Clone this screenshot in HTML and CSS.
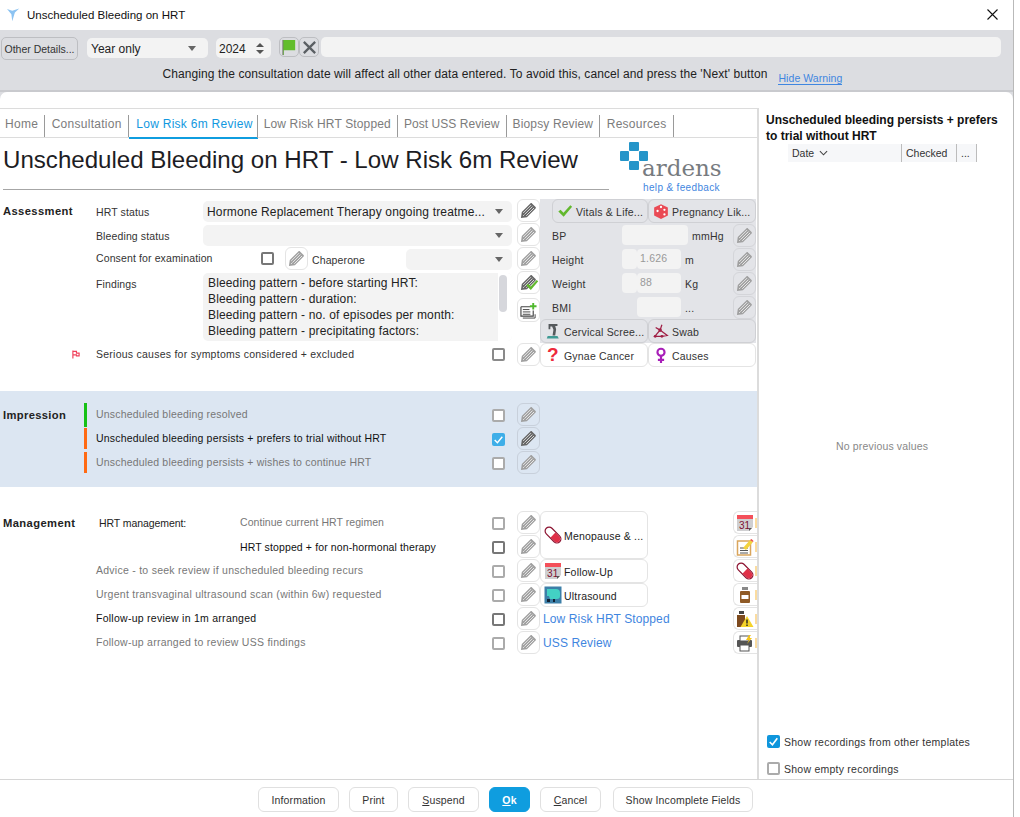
FILE: index.html
```html
<!DOCTYPE html>
<html lang="en">
<head>
<meta charset="utf-8">
<title>Unscheduled Bleeding on HRT</title>
<link rel="stylesheet" href="styles.css">
</head>
<body>
<svg class="defs" aria-hidden="true">
  <symbol id="pencil" viewBox="0 0 18 18">
    <path d="M1 17l.9-6.300L11 1.500c.5-.5 1.200-.5 1.700 0l3.800 3.800c.5.5.5 1.200 0 1.700L7.300 16.100z" fill="currentColor"/>
    <path d="M3.400 11.600l8.300-8.300M5 13.100l8.300-8.300M6.600 14.600l8.300-8.300M3.300 14.700l1.300-1.300" stroke="#fff" stroke-width=".8"/>
  </symbol>
  <symbol id="check" viewBox="0 0 18 18">
    <path d="M1.500 9.500l2.500-2 3.300 3.400L15 2.500l2 1.700L7.500 15.500z" fill="#62b82e"/>
  </symbol>
  <symbol id="calendar" viewBox="0 0 18 18">
    <rect x="1" y="1" width="16" height="16" fill="#cfcfd1"/>
    <rect x="1" y="1" width="16" height="4" fill="#f4505a"/>
    <text x="3" y="14.500" class="cal-text">31</text>
    <path d="M17 13v4h-4z" fill="#fff"/><path d="M13 14h3l-3 3z" fill="#555"/>
  </symbol>
  <symbol id="pill" viewBox="0 0 18 18">
    <g transform="rotate(45 9 9)">
      <rect x="-.5" y="5" width="19" height="8" rx="4" fill="#fff" stroke="#8c1230" stroke-width="1.200"/>
      <path d="M9 5.600h5.500a3.400 3.400 0 0 1 0 6.800H9z" fill="#e03048"/>
    </g>
  </symbol>
</svg>

<div class="window">
  <header class="titlebar">
    <svg class="app-icon" viewBox="0 0 16 16" aria-hidden="true"><path d="M0 1l6 2 8-2.500-5 4.500-3 10-1-8z" fill="#8cc3f2"/></svg>
    <span class="titlebar-text">Unscheduled Bleeding on HRT</span>
    <svg class="close-icon" viewBox="0 0 11 11" aria-hidden="true"><path d="M.5.500l10 10M10.500.500l-10 10" stroke="#111" stroke-width="1.100"/></svg>
  </header>

  <section class="toolbar">
    <div class="toolbar-row">
      <button class="other-btn">Other Details...</button>
      <div class="select year-select"><span>Year only</span><i class="caret"></i></div>
      <div class="select spin-select"><span>2024</span>
        <span class="spin"><i class="spin-up"></i><i class="spin-down"></i></span></div>
      <div class="tool-icons">
        <span class="tool-btn"><svg viewBox="0 0 18 18" aria-hidden="true"><path d="M2 1h13v11H3v5H2z" fill="#62bd2c"/><path d="M2 1v16" stroke="#777"/></svg></span>
        <span class="tool-btn"><svg viewBox="0 0 18 18" aria-hidden="true"><path d="M3 3l12 12M15 3L3 15" stroke="#5a5f63" stroke-width="2.400"/></svg></span>
      </div>
      <div class="tool-input"></div>
    </div>
    <div class="warning-row">
      <span class="warning">Changing the consultation date will affect all other data entered. To avoid this, cancel and press the 'Next' button</span>
      <a class="hide-warning">Hide Warning</a>
    </div>
  </section>

  <main class="panel">
    <div class="panel-main">
      <div class="template">
        <nav class="tabs">
          <a class="tab">Home</a>
          <a class="tab">Consultation</a>
          <a class="tab active">Low Risk 6m Review</a>
          <a class="tab tight">Low Risk HRT Stopped</a>
          <a class="tab tighter">Post USS Review</a>
          <a class="tab tight">Biopsy Review</a>
          <a class="tab">Resources</a>
        </nav>

        <div class="heading">
          <h1>Unscheduled Bleeding on HRT - Low Risk 6m Review</h1>
          <div class="logo">
            <svg class="logo-mark" viewBox="0 0 28 28" aria-hidden="true">
              <rect x="9" y="0" width="10" height="9" rx="1" fill="#2595c9"/>
              <rect x="0" y="9" width="9" height="10" rx="1" fill="#2595c9"/>
              <rect x="19" y="9" width="9" height="10" rx="1" fill="#2595c9"/>
              <rect x="9" y="19" width="10" height="9" rx="1" fill="#2595c9"/>
            </svg>
            <span class="logo-name">ardens</span>
            <a class="logo-link">help &amp; feedback</a>
          </div>
        </div>

        <section class="assess">
          <div class="assess-main">
            <h2 class="sec-label">Assessment</h2>
            <span class="lbl">HRT status</span>
            <div class="select field"><span>Hormone Replacement Therapy ongoing treatme...</span><i class="caret"></i></div>
            <span></span>
            <span class="pen-box dark"><svg><use href="#pencil"/></svg></span>

            <span></span>
            <span class="lbl">Bleeding status</span>
            <div class="select field"><i class="caret"></i></div>
            <span></span>
            <span class="pen-box"><svg><use href="#pencil"/></svg></span>

            <span></span>
            <div class="consent">
              <span class="lbl consent-lbl">Consent for examination</span>
              <i class="cb"></i>
              <span class="pen-box"><svg><use href="#pencil"/></svg></span>
              <span class="lbl chaperone">Chaperone</span>
              <div class="select chap-field"><i class="caret"></i></div>
            </div>
            <span></span>
            <span class="pen-box"><svg><use href="#pencil"/></svg></span>

            <span></span>
            <span class="lbl findings-lbl">Findings</span>
            <div class="findings">
              <div class="findings-text">
                <div>Bleeding pattern - before starting HRT:</div>
                <div>Bleeding pattern - duration:</div>
                <div>Bleeding pattern - no. of episodes per month:</div>
                <div>Bleeding pattern - precipitating factors:</div>
              </div>
              <div class="scrollbar"><i></i></div>
            </div>
            <span></span>
            <div class="pen-stack">
              <span class="pen-box dark pen-checked"><svg><use href="#pencil"/></svg><svg class="pen-tick"><use href="#check"/></svg></span>
              <span class="pen-box note-box"><svg viewBox="0 0 18 18" aria-hidden="true"><path d="M1 5h10M1 5v10h13V9" fill="none" stroke="#444" stroke-width="1.200"/><path d="M3 8h7M3 10.500h8M3 13h8M3 17h13v-4" fill="none" stroke="#444"/><path d="M14 1v7M10.500 4.500h7" stroke="#4fb82c" stroke-width="2"/></svg></span>
            </div>

            <span class="flag-cell"><svg class="flag" viewBox="0 0 9 9" aria-hidden="true"><path d="M1 0v9M1 1h4v2h3v3H5V5H1" fill="none" stroke="#f0405a" stroke-width="1.300"/></svg></span>
            <div class="serious">
              <span class="lbl">Serious causes for symptoms considered + excluded</span>
              <i class="cb"></i>
            </div>
            <span></span>
            <span class="pen-box"><svg><use href="#pencil"/></svg></span>
          </div>

          <div class="assess-side">
            <div class="side-grey">
              <div class="side-btns inset">
                <button class="grey-btn vitals"><svg><use href="#check"/></svg>Vitals &amp; Life...</button>
                <button class="grey-btn preg"><svg viewBox="0 0 14 14" aria-hidden="true"><path d="M1 4l6-3 6 3v7l-6 3-6-3z" fill="#ea4a55"/><circle cx="4" cy="7" r="1" fill="#fff"/><circle cx="10" cy="6" r="1" fill="#fff"/><circle cx="10" cy="10" r="1" fill="#fff"/><circle cx="7" cy="3.500" r="1" fill="#fff"/></svg>Pregnancy Lik...</button>
              </div>
              <div class="vital">
                <span class="v-name">BP</span>
                <i class="v-input bp"></i>
                <span class="v-unit">mmHg</span>
                <span class="pen-box grey"><svg><use href="#pencil"/></svg></span>
              </div>
              <div class="vital">
                <span class="v-name">Height</span>
                <i class="v-input stub"></i><span class="v-input val">1.626</span>
                <span class="v-unit">m</span>
                <span class="pen-box grey"><svg><use href="#pencil"/></svg></span>
              </div>
              <div class="vital">
                <span class="v-name">Weight</span>
                <i class="v-input stub"></i><span class="v-input val">88</span>
                <span class="v-unit">Kg</span>
                <span class="pen-box grey"><svg><use href="#pencil"/></svg></span>
              </div>
              <div class="vital">
                <span class="v-name">BMI</span>
                <i class="v-input stub blank"></i><span class="v-input val"></span>
                <span class="v-unit">...</span>
                <span class="pen-box grey"><svg><use href="#pencil"/></svg></span>
              </div>
              <div class="side-btns">
                <button class="grey-btn half"><svg viewBox="0 0 14 18" aria-hidden="true"><path d="M2 1h10v2.500H9.500L10.500 7l-1 7H6.500l1-6.500L6 4H4v3H2z" fill="#55595c"/><path d="M1 14.500h11l1.500 3H0z" fill="#3f9a94"/></svg>Cervical Scree...</button>
                <button class="grey-btn half"><svg viewBox="0 0 18 18" aria-hidden="true"><path d="M2 15l6-7 8 6-6 1zM8 8l2-6M8 8L3 5M10 15l6-1" fill="none" stroke="#a01f45" stroke-width="1.400"/><circle cx="8" cy="8" r="2" fill="#a01f45"/><circle cx="10" cy="15" r="1.600" fill="#a01f45"/><circle cx="2.500" cy="15" r="1.600" fill="#a01f45"/></svg>Swab</button>
              </div>
            </div>
            <div class="side-btns white-btns">
              <button class="white-btn half"><span class="qmark">?</span>Gynae Cancer</button>
              <button class="white-btn half"><svg viewBox="0 0 12 18" aria-hidden="true"><circle cx="6" cy="6" r="4" fill="none" stroke="#a81fb8" stroke-width="2.400"/><path d="M6 10v8M2.500 14.500h7" stroke="#a81fb8" stroke-width="2.400"/></svg>Causes</button>
            </div>
          </div>
        </section>

        <section class="impression">
          <h2 class="sec-label">Impression</h2>
          <div class="imp-row"><i class="bar green"></i><span class="lbl muted">Unscheduled bleeding resolved</span><i class="cb"></i><span class="pen-box blue"><svg><use href="#pencil"/></svg></span></div>
          <span></span>
          <div class="imp-row"><i class="bar orange"></i><span class="lbl strong">Unscheduled bleeding persists + prefers to trial without HRT</span><i class="cb checked"><svg viewBox="0 0 12 12" aria-hidden="true"><path d="M2.500 6.500l2.500 2.500 4.500-5.500" fill="none" stroke="#fff" stroke-width="1.300"/></svg></i><span class="pen-box blue dark"><svg><use href="#pencil"/></svg></span></div>
          <span></span>
          <div class="imp-row"><i class="bar orange"></i><span class="lbl muted">Unscheduled bleeding persists + wishes to continue HRT</span><i class="cb"></i><span class="pen-box blue"><svg><use href="#pencil"/></svg></span></div>
        </section>

        <section class="mgmt">
          <h2 class="sec-label mg-label">Management</h2>
          <span class="lbl hrt-mg">HRT management:</span>
          <span class="lbl muted narrow">Continue current HRT regimen</span>
          <i class="cb"></i>
          <span class="pen-box"><svg><use href="#pencil"/></svg></span>
          <button class="white-btn meno"><svg class="ico18"><use href="#pill"/></svg>Menopause &amp; ...</button>
          <span class="edge-ico"><svg><use href="#calendar"/></svg></span>

          <span class="lbl strong col3">HRT stopped + for non-hormonal therapy</span>
          <i class="cb dk"></i>
          <span class="pen-box"><svg><use href="#pencil"/></svg></span>
          <span class="edge-ico col-edge"><svg viewBox="0 0 18 18" aria-hidden="true"><rect x="1.500" y="3" width="13" height="14" fill="#fff" stroke="#d9a55c" stroke-width="1.500"/><path d="M4 10h8M4 12.500h8M4 15h8" stroke="#555"/><path d="M7 10l7-8 3 2-7 8z" fill="#f3d33e"/><path d="M14 2l1.500-1 2 2-.5 1z" fill="#e84a4a"/></svg></span>

          <span class="lbl muted wide">Advice - to seek review if unscheduled bleeding recurs</span>
          <i class="cb"></i>
          <span class="pen-box"><svg><use href="#pencil"/></svg></span>
          <button class="white-btn"><svg class="ico18"><use href="#calendar"/></svg>Follow-Up</button>
          <span class="edge-ico"><svg><use href="#pill"/></svg></span>

          <span class="lbl muted wide">Urgent transvaginal ultrasound scan (within 6w) requested</span>
          <i class="cb"></i>
          <span class="pen-box"><svg><use href="#pencil"/></svg></span>
          <button class="white-btn"><svg class="ico18" viewBox="0 0 18 18" aria-hidden="true"><rect width="17" height="17" x=".5" y=".5" fill="#3c7fa8"/><path d="M3 3h9a4 4 0 0 1 4 4v3a3 3 0 0 1-3 3H6l-1-3H3z" fill="#43d0c4"/><rect x="3" y="13" width="3" height="3" fill="#123"/><rect x="9" y="13" width="2" height="3" fill="#123"/></svg>Ultrasound</button>
          <span class="edge-ico"><svg viewBox="0 0 18 18" aria-hidden="true"><rect x="6" y="1" width="6" height="3" fill="#888"/><rect x="4" y="5" width="10" height="12" rx="1" fill="#8f5a26"/><rect x="5.500" y="9" width="7" height="4" fill="#fff"/></svg></span>

          <span class="lbl strong wide">Follow-up review in 1m arranged</span>
          <i class="cb dk"></i>
          <span class="pen-box"><svg><use href="#pencil"/></svg></span>
          <a class="tpl-link">Low Risk HRT Stopped</a>
          <span class="edge-ico"><svg viewBox="0 0 18 18" aria-hidden="true"><rect x="3" y="1" width="5" height="3" fill="#444"/><rect x="1" y="5" width="8" height="12" fill="#7d4a1e"/><path d="M11 6l6.500 11h-13z" fill="#f5d328"/><path d="M11 9.500v4M11 14.500v1.500" stroke="#222" stroke-width="1.400"/></svg></span>

          <span class="lbl muted wide">Follow-up arranged to review USS findings</span>
          <i class="cb"></i>
          <span class="pen-box"><svg><use href="#pencil"/></svg></span>
          <a class="tpl-link">USS Review</a>
          <span class="edge-ico"><svg viewBox="0 0 18 18" aria-hidden="true"><rect x="1" y="6" width="15" height="7" rx="1" fill="#555"/><rect x="4" y="2" width="9" height="5" fill="#fff" stroke="#555"/><rect x="4" y="11" width="9" height="6" fill="#fff" stroke="#555"/><path d="M13 1l-3 5h3l-2 4 5-6h-3l2-3z" fill="#f5c518"/></svg></span>
        </section>
      </div>

      <aside class="history">
        <h3>Unscheduled bleeding persists + prefers to trial without HRT</h3>
        <div class="hist-head">
          <span class="hh date">Date<svg viewBox="0 0 10 6" aria-hidden="true"><path d="M1 1l4 4 4-4" fill="none" stroke="#444" stroke-width="1.200"/></svg></span>
          <span class="hh checked-col">Checked</span>
          <span class="hh more">...</span>
        </div>
        <div class="no-values">No previous values</div>
        <label class="opt"><i class="cb checked big"><svg viewBox="0 0 12 12" aria-hidden="true"><path d="M2.500 6.500l2.500 2.500 4.500-6" fill="none" stroke="#fff" stroke-width="1.500"/></svg></i>Show recordings from other templates</label>
        <label class="opt last"><i class="cb"></i>Show empty recordings</label>
      </aside>
    </div>

    <footer class="actions">
      <button class="act w-info">Information</button>
      <button class="act w-print">Print</button>
      <button class="act w-suspend"><u>S</u>uspend</button>
      <button class="act w-ok primary"><u>O</u>k</button>
      <button class="act w-cancel"><u>C</u>ancel</button>
      <button class="act w-show">Show Incomplete Fields</button>
    </footer>
  </main>
</div>
</body>
</html>
```

FILE: styles.css
```css
* { box-sizing: border-box; }
html, body { margin: 0; padding: 0; background: #fff; }
body { font-family: "Liberation Sans", Arial, sans-serif; color: #222; }
.defs { display: none; }
button { font-family: inherit; cursor: default; }
i { display: block; font-style: normal; }

.window { width: 1014px; height: 817px; display: flex; flex-direction: column; border-right: 1px solid #b9b9b9; overflow: hidden; background: #dcdde1; }

.titlebar { height: 30px; flex: none; display: flex; align-items: center; padding: 0 15px 0 7px; background: #fff; }
.app-icon { width: 14px; height: 16px; margin-right: 6px; }
.titlebar-text { font-size: 11.5px; color: #111; letter-spacing: .02px; }
.close-icon { width: 11px; height: 11px; margin-left: auto; margin-top: -2px; }

.toolbar { height: 62px; flex: none; background: #dcdde1; padding: 7px 12px 0 1px; border-bottom: 2px solid #c9cace; }
.toolbar-row { display: flex; align-items: flex-start; height: 21px; }
.other-btn { width: 77px; height: 23px; padding: 0; font-size: 10.5px; color: #333; background: #dcdde1; border: 1px solid #bdbec2; border-radius: 5px; }
.select { display: flex; align-items: center; background: #f3f3f3; border-radius: 5px; font-size: 12px; color: #222; }
.caret { width: 0; height: 0; border: 4px solid transparent; border-top: 5px solid #666; border-bottom: 0; margin-left: auto; flex: none; }
.year-select { width: 121px; height: 20px; margin: 1px 0 0 9px; padding: 1px 12px 0 4px; }
.spin-select { width: 55px; height: 20px; margin: 1px 0 0 8px; padding: 1px 7px 0 3px; }
.spin { margin-left: auto; display: flex; flex-direction: column; gap: 3px; }
.spin-up { border: 4px solid transparent; border-bottom: 4px solid #555; border-top: 0; }
.spin-down { border: 4px solid transparent; border-top: 4px solid #555; border-bottom: 0; }
.tool-icons { display: flex; margin-left: 8px; }
.tool-btn { width: 20px; height: 20px; border: 1px solid #bdbec2; border-radius: 5px; display: flex; align-items: center; justify-content: center; }
.tool-btn svg { width: 17px; height: 17px; }
.tool-input { flex: 1; height: 20px; margin-left: 2px; background: #f3f3f3; border-radius: 5px; }
.warning-row { display: flex; align-items: flex-end; margin-top: 9px; padding-left: 161.500px; }
.warning { font-size: 12px; color: #222; letter-spacing: .09px; }
.hide-warning { font-size: 10.5px; color: #3f86e0; border-bottom: 1px solid #3f86e0; margin-left: 11px; margin-bottom: -4px; letter-spacing: .06px; }

.panel { flex: 1; min-height: 0; display: flex; flex-direction: column; background: #fff; border-radius: 7px 7px 0 0; }
.panel-main { height: 688px; display: flex; border-bottom: 1px solid #d6d6d6; }
.template { width: 759px; flex: none; margin-top: 16px; border-top: 1px solid #dcdcdc; border-right: 2px solid #dcdcdc; overflow: hidden; }

.tabs { height: 29px; display: flex; border-bottom: 1px solid #dcdcdc; padding-top: 6px; }
.tab { height: 22px; font-size: 12px; line-height: 18px; color: #7c7c7c; padding: 0 6.500px; border-right: 1px solid #9a9a9a; letter-spacing: .28px; }
.tab:first-child { padding-left: 5px; padding-right: 6px; }
.tab.tight { letter-spacing: .15px; padding: 0 6px; }
.tab.tighter { letter-spacing: .06px; padding: 0 6px; }
.tab.active { color: #1298e0; padding: 0 4px 0 7px; height: 23px; box-shadow: 0 1px 0 0 #0f9ddf, inset 0 -1px 0 #0f9ddf; }

.heading { height: 61px; display: flex; }
h1 { width: 606px; height: 52px; margin: 0 0 0 3px; padding-top: 8px; font-size: 24.100px; line-height: 28px; font-weight: 400; color: #1d1d24; border-bottom: 1px solid #a6a6a6; flex: none; white-space: nowrap; }
.logo { margin-left: 11px; padding-top: 4px; width: 110px; display: flex; flex-direction: column; }
.logo-mark { width: 28px; height: 28px; display: block; flex: none; }
.logo-name { font-family: "DejaVu Serif", serif; font-size: 23px; line-height: 20px; color: #777b80; margin: -12px 0 0 22px; font-weight: 400; }
.logo-link { font-size: 10px; line-height: 12px; margin-left: 23px; margin-top: 4px; color: #3f86e0; letter-spacing: .35px; white-space: nowrap; }

.sec-label { margin: 0; font-size: 11.200px; font-weight: 700; color: #222; padding: 6px 0 0 3px; letter-spacing: .4px; }
.lbl { font-size: 10.5px; line-height: 26px; color: #333; white-space: nowrap; letter-spacing: .12px; }
.lbl.muted { color: #777; }
.lbl.strong { color: #111; }
.lbl.wide { letter-spacing: .26px; }
.lbl.narrow { letter-spacing: .05px; }

.pen-box { width: 23px; height: 23px; border: 1px solid #e4e4e4; border-radius: 6px; display: flex; align-items: center; justify-content: center; color: #a0a0a0; background: #fff; flex: none; }
.pen-box svg { width: 17px; height: 17px; }
.pen-box.dark { color: #666; }
.pen-box.grey { background: #e3e4e8; border-color: #d4d5d9; }
.pen-box.blue { background: #dce6f2; border-color: #c8d0db; }
.cb { width: 13px; height: 13px; border: 2px solid #ababab; border-radius: 2px; background: #fff; flex: none; }
.cb.dk { border-color: #777; }
.cb.checked { background: #3eaee8; border: 0; }
.cb.checked svg { display: block; width: 13px; height: 13px; }
.cb.big { background: #0f96dc; }

.assess { display: flex; }
.assess-main { width: 540px; flex: none; display: grid; grid-template-columns: 96px 107px 309px 5px 23px; grid-template-rows: 24px 24px 24px 72px 24px; }
.select.field { height: 21px; margin-top: 2px; padding: 0 9px 0 4px; font-size: 12px; white-space: nowrap; letter-spacing: .16px; }
.consent { grid-column: span 2; display: flex; align-items: flex-start; }
.consent-lbl { width: 165px; line-height: 22px; flex: none; }
.consent .cb { margin: 5px 11px 0 0; border-color: #777; }
.chaperone { margin: 0 0 0 4px; width: 94px; flex: none; line-height: 26px; }
.chap-field { width: 107px; height: 21px; margin-top: 2px; padding-right: 9px; }
.findings-lbl { line-height: 24px; padding-top: 1px; }
.findings { height: 68px; margin-top: 2px; background: #f3f3f3; border-radius: 5px; display: flex; overflow: hidden; }
.findings-text { flex: 1; padding: 2px 5px; font-size: 12px; line-height: 16px; letter-spacing: .14px; white-space: nowrap; }
.scrollbar { width: 14px; background: #fff; padding: 2px 0 0 1px; flex: none; }
.scrollbar i { width: 8px; height: 37px; background: #d6d7dc; border-radius: 4px; }
.pen-stack { display: flex; flex-direction: column; gap: 4px; }
.pen-checked { position: relative; }
.pen-tick { position: absolute; width: 14px !important; height: 14px !important; right: 0; bottom: 1px; }
.note-box { height: 24px; }
.flag-cell { display: flex; justify-content: flex-end; padding: 7px 16px 0 0; }
.flag { width: 8px; height: 9px; }
.serious { grid-column: span 2; display: flex; justify-content: space-between; padding-right: 7px; }
.serious .lbl { line-height: 22px; letter-spacing: .25px; }
.serious .cb { margin-top: 5px; border-color: #8a8a8a; }

.assess-side { width: 216px; flex: none; }
.side-grey { background: #e3e4e8; height: 144px; }
.side-btns { display: flex; height: 24px; }
.side-btns.inset { padding-left: 12px; }
.grey-btn, .white-btn { display: flex; align-items: center; padding: 2px 0 0 4px; font-size: 10.5px; letter-spacing: .2px; color: #333; white-space: nowrap; border-radius: 6px; height: 24px; }
.grey-btn { background: #e3e4e8; border: 1px solid #cfd0d4; }
.white-btn { background: #fff; border: 1px solid #e4e4e4; }
.grey-btn svg, .white-btn svg { width: 16px; height: 16px; margin-right: 3px; flex: none; margin-top: -2px; }
.vitals { width: 96px; }
.preg { width: 108px; }
.half { width: 108px; }
.vital { display: flex; height: 24px; padding-left: 12px; align-items: center; font-size: 10.5px; letter-spacing: .2px; color: #333; }
.v-name { width: 70px; flex: none; margin-top: 2px; }
.v-input { height: 20px; background: #f3f3f3; border-radius: 4px; flex: none; }
.v-input.bp { width: 66px; }
.v-input.stub { width: 15px; }
.v-input.stub.blank { background: transparent; }
.v-input.val { width: 44px; font-size: 10.5px; line-height: 18px; padding-left: 3px; color: #999; }
.v-unit { margin: 2px 0 0 4px; }
.vital .pen-box { margin-left: auto; }
.white-btns { height: 24px; }
.qmark { width: 16px; margin: -2px 3px 0 0; text-align: center; font-size: 19px; font-weight: 700; color: #ee2a3a; line-height: 18px; }

.impression { margin-top: 24px; height: 96px; background: #dce6f2; padding-top: 12px; display: grid; grid-template-columns: 84px 1fr; grid-auto-rows: 24px; }
.impression .sec-label { padding-top: 6px; letter-spacing: .35px; }
.imp-row { display: flex; align-items: flex-start; }
.imp-row .lbl { width: 405px; padding-left: 9px; flex: none; line-height: 22px; letter-spacing: .18px; }
.bar { width: 3px; height: 21px; margin-top: 1px; flex: none; }
.bar.green { background: #16c116; height: 24px; margin-top: 0; }
.bar.orange { background: #ff6a14; }
.imp-row .cb { margin-top: 6px; margin-right: 12px; }
.imp-row .pen-box { margin-top: 0; }

.mgmt { margin-top: 24px; display: grid; grid-template-columns: 96px 144px 252px 25px 23px 108px 85px 24px; grid-auto-rows: 24px; }
.mg-label { padding-top: 6px; }
.hrt-mg { padding-left: 3px; color: #222; letter-spacing: -.08px; }
.mgmt > .lbl { line-height: 22px; }
.mgmt > .hrt-mg, .mgmt > .col3 { line-height: 24px; }
.col3 { grid-column: 3; }
.wide { grid-column: 2 / span 2; }
.mgmt .cb { margin-top: 6px; }
.meno { grid-row: span 2; height: 48px; }
.mgmt .white-btn { color: #222; width: 108px; padding-left: 3px; }
.mgmt .white-btn svg { margin-right: 2px; }
.ico18 { width: 18px !important; height: 18px !important; }
.col-edge { grid-column: 8; }
.edge-ico { grid-column: 8; width: 24px; height: 23px; border: 1px solid #e4e4e4; border-right: 0; border-radius: 6px 0 0 6px; display: flex; align-items: center; padding-left: 2px; gap: 1px; }
.edge-ico svg { width: 18px; height: 18px; flex: none; }
.edge-ico::after { content: ""; width: 2px; height: 10px; background: #fbdca0; flex: none; }
.tpl-link { grid-column: 6 / span 2; font-size: 12px; line-height: 24px; color: #3f86e0; padding-left: 3px; letter-spacing: .12px; }

.history { flex: 1; min-width: 0; padding: 20px 0 0 7px; display: flex; flex-direction: column; }
.history h3 { margin: 0; width: 238px; font-size: 12px; line-height: 16px; color: #111; font-weight: 700; }
.hist-head { display: flex; height: 18px; margin: 0 0 0 22px; width: 189px; background: #f6f7f9; font-size: 10.5px; align-items: center; color: #333; flex: none; }
.hh { height: 18px; line-height: 18px; border-right: 1px solid #bcbcbc; flex: none; }
.date { width: 114px; padding-left: 4px; display: flex; align-items: center; }
.date svg { width: 9px; height: 6px; margin-left: 5px; }
.checked-col { width: 55px; padding-left: 4px; }
.more { width: 20px; padding-left: 4px; }
.no-values { margin-top: 278px; padding-left: 70px; font-size: 10.5px; line-height: 12px; color: #888; flex: none; height: 295px; letter-spacing: .16px; }
.opt { display: flex; align-items: center; gap: 4px; font-size: 10.5px; height: 13px; color: #333; margin: 0 0 0 1px; letter-spacing: .24px; white-space: nowrap; }
.opt.last { margin-top: 14px; }

.actions { flex: 1; display: flex; gap: 10px; padding: 7px 0 0 258px; }
.act { height: 25px; padding: 0; background: #fff; border: 1px solid #e0e0e0; border-radius: 6px; font-size: 10.5px; color: #333; letter-spacing: .15px; flex: none; }
.w-info { width: 81px; }
.w-print { width: 49px; }
.w-suspend { width: 71px; }
.w-ok { width: 41px; }
.w-cancel { width: 61px; }
.w-show { width: 140px; margin-left: 2px; }
.act.primary { background: #0f9ddf; border-color: #0f9ddf; color: #fff; font-weight: 700; }

.cal-text { font-family: "Liberation Sans", sans-serif; font-size: 10px; fill: #7d1030; }
```
